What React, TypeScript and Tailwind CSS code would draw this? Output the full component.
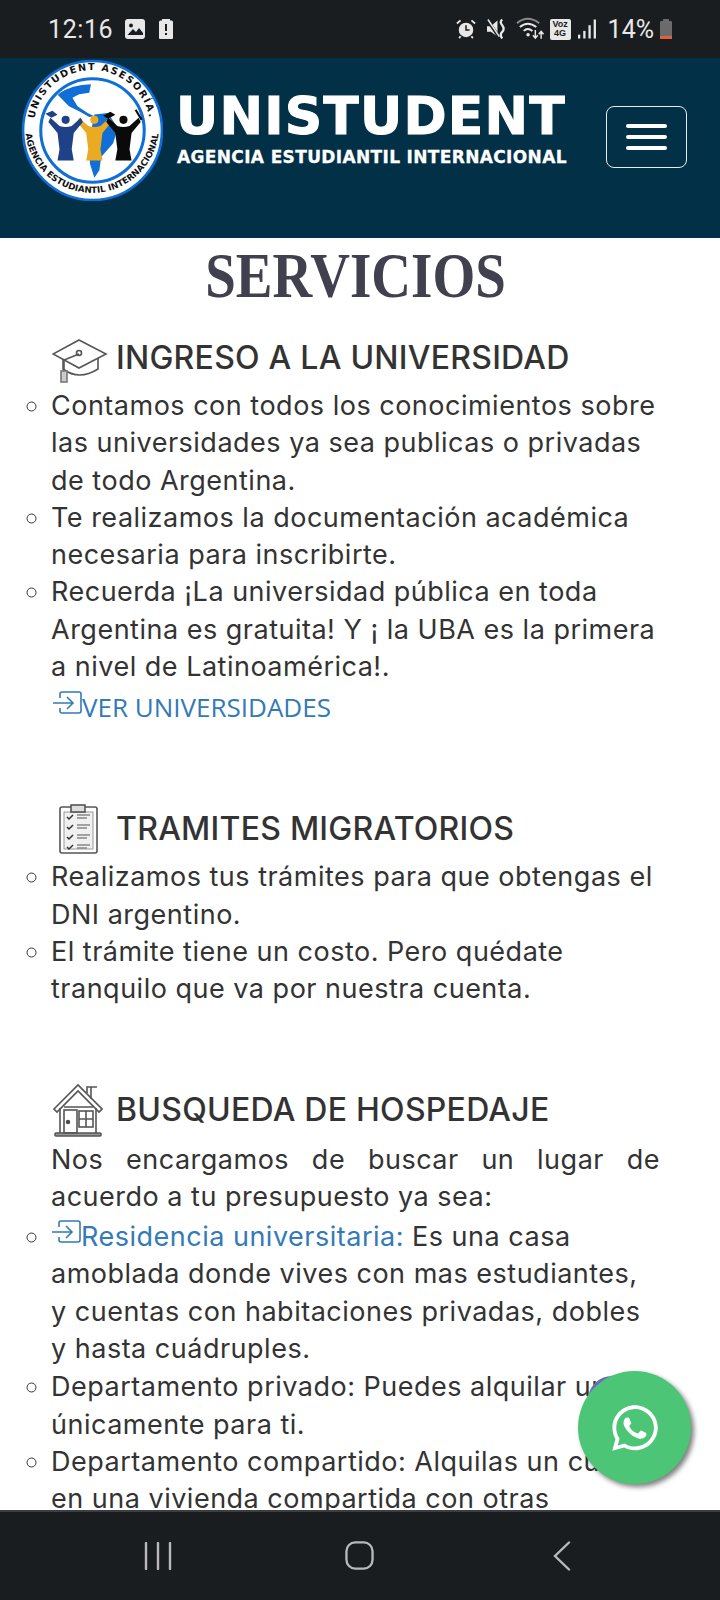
import type { ReactNode } from "react";
import { FaWhatsapp } from "react-icons/fa";

const sans = "font-['Inter','Noto_Sans',sans-serif]";

function Figure({ x, color }: { x: number; color: string }) {
  return (
    <g transform={`translate(${x} 61)`} fill={color}>
      <circle cx="0" cy="-1" r="4" />
      <path d="M-15,-3 L-6,5 Q0,7 6,5 L15,-3 L17,1 L8,12 L6,28 L8,39 L-8,39 L-6,28 L-8,12 L-17,1 Z" />
    </g>
  );
}

function Logo() {
  return (
    <svg viewBox="0 0 140 140" className="mt-[1px] h-[142px] w-[142px] shrink-0">
      <defs>
        <path id="topArc" d="M13,76 A57.5,57.5 0 1 1 127,76" />
        <path id="botArc" d="M4,66 A66,66 0 0 0 136,66" />
        <clipPath id="inner"><circle cx="70.5" cy="70.5" r="49" /></clipPath>
      </defs>
      <circle cx="70.5" cy="70.5" r="68.5" fill="#fff" stroke="#0f6fd6" strokeWidth="2.6" />
      <circle cx="70.5" cy="70.5" r="51" fill="#fff" stroke="#0f6fd6" strokeWidth="3" />
      <g clipPath="url(#inner)" fill="#0f6fd6">
        <path d="M35.7,34.8 Q50.7,24.8 69,24.8 L67.3,33.2 L57.3,34.8 L50.7,38.2 L55.7,46.5 L65.7,53.2 L72.3,56.5 L67.3,57.2 L57.3,51.5 L47.3,46.5 Z" />
        <path d="M72.3,54.8 L85.7,53.2 L95.7,68.2 L90.7,83.2 L79,96.5 L77.3,109.8 L72.3,117.2 L68,103.2 L66.7,83.2 Z" />
      </g>
      <Figure x={72.3} color="#eaaa22" />
      <Figure x={44} color="#1f4188" />
      <Figure x={101} color="#0a0a0a" />
      <path d="M24,54 L31,51 L36,55 L30,58 Z" fill="#1f4188" />
      <path d="M81,56 L88,52 L93,55 L86,59 Z" fill="#0a0a0a" />
      <path d="M113,50 L119,60" stroke="#0a0a0a" strokeWidth="2" />
      <text fontFamily="'DejaVu Sans',sans-serif" fontWeight="700" fontSize="9.6" letterSpacing="1.5" fill="#111">
        <textPath href="#topArc" startOffset="50%" textAnchor="middle">UNISTUDENT ASESORÍA.</textPath>
      </text>
      <text fontFamily="'DejaVu Sans',sans-serif" fontWeight="700" fontSize="8.6" letterSpacing="0" fill="#111">
        <textPath href="#botArc" startOffset="50%" textAnchor="middle">AGENCIA ESTUDIANTIL INTERNACIONAL</textPath>
      </text>
    </svg>
  );
}

function StatusBar() {
  return (
    <div className="flex h-[58px] shrink-0 items-center justify-between bg-[#1a1d20] pl-[48px] pr-[47px] font-['Roboto',sans-serif] text-[#e8e8e8]">
      <div className="flex items-center">
        <span className="text-[25px] leading-none tracking-[0.6px]">12:16</span>
        <svg viewBox="0 0 22 22" className="ml-[11px] h-[22px] w-[22px]">
          <rect x="1" y="1" width="20" height="20" rx="3" fill="#e8e8e8" />
          <circle cx="7" cy="7.5" r="2" fill="#1a1d20" />
          <path d="M3.5 17 L9 11 L12 14 L15 10 L19 15 V17 Z" fill="#1a1d20" />
        </svg>
        <svg viewBox="0 0 16 22" className="ml-[12px] h-[22px] w-[16px]">
          <path d="M1 4 Q1 2.5 2.5 2.5 H4 V1 H12 V2.5 H13.5 Q15 2.5 15 4 V20 Q15 21 14 21 H2 Q1 21 1 20 Z" fill="#e8e8e8" />
          <rect x="7" y="6" width="2" height="7" fill="#1a1d20" />
          <rect x="7" y="15" width="2" height="2" fill="#1a1d20" />
        </svg>
      </div>
      <div className="flex items-center">
        <svg viewBox="0 0 22 22" className="h-[20px] w-[20px]">
          <circle cx="11" cy="12" r="8" fill="#e8e8e8" />
          <path d="M1 5 L5 1.5 M21 5 L17 1.5 M5 19 L3.5 21 M17 19 L18.5 21" stroke="#e8e8e8" strokeWidth="2" />
          <path d="M11 7 V12 H15" stroke="#1a1d20" strokeWidth="1.7" fill="none" />
        </svg>
        <svg viewBox="0 0 20 20" className="ml-[11px] h-[20px] w-[19px]">
          <path d="M0 7 H4 L11 1 V18 L4 13 H0 Z" fill="#e8e8e8" />
          <path d="M0 0 L13 19" stroke="#1a1d20" strokeWidth="3.4" />
          <path d="M1 0 L13 18" stroke="#e8e8e8" strokeWidth="1.6" />
          <path d="M16 0 Q13 3 16 6 Q19 10 16 13 Q13 16 16 20" stroke="#e8e8e8" strokeWidth="2.4" fill="none" />
        </svg>
        <svg viewBox="0 0 30 24" className="ml-[10px] h-[24px] w-[29px]">
          <path d="M1 6 Q12 -3 24 6" stroke="#8a8a8a" strokeWidth="2" fill="none" />
          <path d="M4 10 Q12 3 21 10" stroke="#e8e8e8" strokeWidth="2" fill="none" />
          <path d="M8 14 Q12 10 17 14" stroke="#e8e8e8" strokeWidth="2" fill="none" />
          <circle cx="12.5" cy="18" r="1.8" fill="#e8e8e8" />
          <path d="M20 13 V21 M17.5 18.5 L20 21.5 L22.5 18.5 M26 22 V15 M23.5 17.5 L26 14.5 L28.5 17.5" stroke="#e8e8e8" strokeWidth="1.5" fill="none" />
        </svg>
        <div className="ml-[5px] flex h-[21px] w-[21px] flex-col items-center justify-center rounded-[2px] bg-[#e8e8e8] font-['Liberation_Sans',sans-serif] text-[9px] font-bold leading-[9px] text-[#1a1d20]">
          <span>Voz</span>
          <span>4G</span>
        </div>
        <svg viewBox="0 0 20 20" className="ml-[7px] h-[20px] w-[19px]">
          <rect x="0" y="16" width="2.4" height="4" fill="#e8e8e8" />
          <rect x="5.5" y="12" width="2.4" height="8" fill="#e8e8e8" />
          <rect x="11" y="6" width="2.4" height="14" fill="#e8e8e8" />
          <rect x="16.5" y="0" width="2.4" height="20" fill="#e8e8e8" />
        </svg>
        <span className="ml-[11px] text-[25px] leading-none">14%</span>
        <svg viewBox="0 0 14 22" className="ml-[5px] h-[22px] w-[14px]">
          <path d="M1 4 Q1 3 2 3 H4 V1 H10 V3 H12 Q13 3 13 4 V21 H1 Z" fill="#6b6b6b" />
          <path d="M1 18 H13 V20 Q13 21 12 21 H2 Q1 21 1 20 Z" fill="#e2603a" />
        </svg>
      </div>
    </div>
  );
}

function Header() {
  return (
    <div className="flex h-[180px] shrink-0 items-start bg-[#023047] pl-[21px]">
      <Logo />
      <div className="ml-[13px] mt-[33px] w-[396px] font-['DejaVu_Sans',sans-serif] font-bold text-white">
        <div className="whitespace-nowrap text-[52px] leading-[50px] tracking-[1.2px] [-webkit-text-stroke:1px_white]">UNISTUDENT</div>
        <div className="ml-[1px] mt-[6px] whitespace-nowrap text-[17px] leading-[20px] tracking-[0.35px] [-webkit-text-stroke:0.3px_white]">AGENCIA ESTUDIANTIL INTERNACIONAL</div>
      </div>
      <div className="ml-[34px] mt-[48px] flex h-[62px] w-[81px] flex-col items-center justify-center gap-[7px] rounded-[8px] border border-[#e6edf0]">
        <span className="h-[4px] w-[41px] rounded-full bg-white" />
        <span className="h-[4px] w-[41px] rounded-full bg-white" />
        <span className="h-[4px] w-[41px] rounded-full bg-white" />
      </div>
    </div>
  );
}

function EntryIcon() {
  return (
    <svg viewBox="0 0 30 26" className="inline-block h-[26px] w-[30px] align-baseline" fill="none" stroke="#337ab7" strokeWidth="1.6">
      <path d="M8 7 V3 Q8 1 10 1 H27 Q29 1 29 3 V20 Q29 22 27 22 H10 Q8 22 8 20 V17" />
      <path d="M1 12 H21 M15 6 L21 12 L15 18" />
    </svg>
  );
}

function CapIcon() {
  return (
    <svg viewBox="0 0 56 44" className="mt-[6px] h-[44px] w-[56px] shrink-0" fill="none" stroke="#555" strokeWidth="1.6">
      <path d="M27 1 L54 15 L27 29 L1 15 Z" />
      <path d="M11 20 V30 Q27 42 46 30 V19" />
      <path d="M27 15 L12 21 V32" />
      <circle cx="27" cy="14" r="2.5" />
      <rect x="9" y="32" width="6" height="11" stroke="#777" fill="#ccc" />
    </svg>
  );
}

function ClipboardIcon() {
  const rows = [13, 23, 33, 43];
  return (
    <svg viewBox="0 0 40 50" className="h-[50px] w-[40px] shrink-0" fill="none" stroke="#555" strokeWidth="1.6">
      <rect x="1" y="3" width="37" height="46" rx="2" />
      <rect x="5" y="8" width="29" height="37" fill="#f1f1f1" stroke="#999" strokeWidth="1" />
      <rect x="12" y="1" width="14" height="7" fill="#ddd" />
      {rows.map((y) => (
        <g key={y}>
          <path d={`M8 ${y} L10 ${y + 2} L14 ${y - 2}`} stroke="#333" strokeWidth="1.5" />
          <path d={`M18 ${y - 2} H31 M18 ${y + 1} H28`} stroke="#888" strokeWidth="1.4" />
        </g>
      ))}
    </svg>
  );
}

function HouseIcon() {
  return (
    <svg viewBox="0 0 50 54" className="h-[54px] w-[50px] shrink-0" fill="none" stroke="#555" strokeWidth="1.6">
      <path d="M1 26 L25 2 L49 26 L46 29 L25 8 L4 29 Z" />
      <path d="M34 10 V4 H44 M38 4 V16" />
      <path d="M7 25 V50 M43 25 V50" />
      <rect x="2" y="50" width="46" height="3" rx="1" fill="#999" />
      <rect x="11" y="27" width="13" height="23" />
      <circle cx="15" cy="39" r="1.5" fill="#333" />
      <rect x="26" y="28" width="14" height="16" />
      <path d="M33 28 V44 M26 36 H40 M11 24 H40" />
    </svg>
  );
}

function Section({ icon, title, gap, iconPad }: { icon: ReactNode; title: string; gap: string; iconPad: string }) {
  return (
    <div className={`flex h-[55px] items-center ${iconPad}`}>
      {icon}
      <h2 className={`${gap} whitespace-nowrap text-[32px] font-medium leading-[50px] tracking-[0.25px] text-[#333]`}>{title}</h2>
    </div>
  );
}

function Content() {
  return (
    <div className={`min-h-0 flex-1 overflow-hidden bg-white text-[27px] leading-[37.3px] tracking-[0.5px] text-[#333] ${sans}`}>
      <h1 className="mt-[5px] origin-center scale-y-[1.15] pr-[9px] text-center font-['Liberation_Serif',serif] text-[55px] font-bold leading-[66px] tracking-normal text-[#40404e]">SERVICIOS</h1>

      <div className="mt-[21px]">
        <Section icon={<CapIcon />} title="INGRESO A LA UNIVERSIDAD" gap="ml-[8px]" iconPad="pl-[52px]" />
      </div>
      <ul className="list-[circle] pl-[51px] pt-[2px]">
        <li>Contamos con todos los conocimientos sobre<br />las universidades ya sea publicas o privadas<br />de todo Argentina.</li>
        <li>Te realizamos la documentación académica<br />necesaria para inscribirte.</li>
        <li>Recuerda ¡La universidad pública en toda<br />Argentina es gratuita! Y ¡ la UBA es la primera<br />a nivel de Latinoamérica!.</li>
      </ul>
      <div className="pl-[52px] pt-[2px] font-['Open_Sans',sans-serif] text-[26px] leading-[40px] tracking-normal text-[#337ab7]">
        <EntryIcon />VER UNIVERSIDADES
      </div>

      <div className="mt-[74px]">
        <Section icon={<ClipboardIcon />} title="TRAMITES MIGRATORIOS" gap="ml-[17px]" iconPad="pl-[59px]" />
      </div>
      <ul className="list-[circle] pl-[51px] pt-[2px]">
        <li>Realizamos tus trámites para que obtengas el<br />DNI argentino.</li>
        <li>El trámite tiene un costo. Pero quédate<br />tranquilo que va por nuestra cuenta.</li>
      </ul>

      <div className="mt-[75px]">
        <Section icon={<HouseIcon />} title="BUSQUEDA DE HOSPEDAJE" gap="ml-[13px]" iconPad="pl-[53px]" />
      </div>
      <div className="w-[660px] pl-[51px] pt-[3px] text-justify">
        <div className="[text-align-last:justify]">Nos encargamos de buscar un lugar de</div>
        <div>acuerdo a tu presupuesto ya sea:</div>
      </div>
      <ul className="list-[circle] pl-[51px] pt-[3px]">
        <li><EntryIcon /><span className="text-[#337ab7]">Residencia universitaria:</span> Es una casa<br />amoblada donde vives con mas estudiantes,<br />y cuentas con habitaciones privadas, dobles<br />y hasta cuádruples.</li>
        <li className="mt-[1px]">Departamento privado: Puedes alquilar uno<br />únicamente para ti.</li>
        <li>Departamento compartido: Alquilas un cuarto<br />en una vivienda compartida con otras<br />personas.</li>
      </ul>
    </div>
  );
}

function NavBar() {
  return (
    <div className="flex h-[90px] shrink-0 items-center border-t-2 border-[#3b3f42] bg-[#1a1d20]">
      <div className="flex items-center pb-[1px] pl-[144px]">
        <svg viewBox="0 0 28 28" className="h-[28px] w-[28px]" fill="none" stroke="#b9b9b9" strokeWidth="2.4" strokeLinecap="round">
          <path d="M2 1 V27 M14 1 V27 M26 1 V27" />
        </svg>
        <svg viewBox="0 0 30 30" className="ml-[173px] h-[29px] w-[29px]" fill="none" stroke="#b9b9b9" strokeWidth="2.4">
          <rect x="1.5" y="1.5" width="27" height="27" rx="9" />
        </svg>
        <svg viewBox="0 0 18 30" className="ml-[179px] h-[30px] w-[18px]" fill="none" stroke="#b9b9b9" strokeWidth="2.4" strokeLinecap="round">
          <path d="M16 1.5 L2 15 L16 28.5" />
        </svg>
      </div>
    </div>
  );
}

export default function App() {
  return (
    <div className="relative flex h-[1600px] w-[720px] flex-col overflow-hidden bg-white">
      <StatusBar />
      <Header />
      <Content />
      <NavBar />
      <div className="absolute left-[588px] top-[1376px] h-[48px] w-[48px] rounded-full bg-[#6f6cc0]" />
      <div className="absolute left-[578px] top-[1371px] flex h-[113px] w-[113px] items-center justify-center rounded-full bg-[#4dc576] text-white shadow-[3px_3px_5px_rgba(0,0,0,0.5)]">
        <FaWhatsapp className="h-[52px] w-[52px]" />
      </div>
    </div>
  );
}
